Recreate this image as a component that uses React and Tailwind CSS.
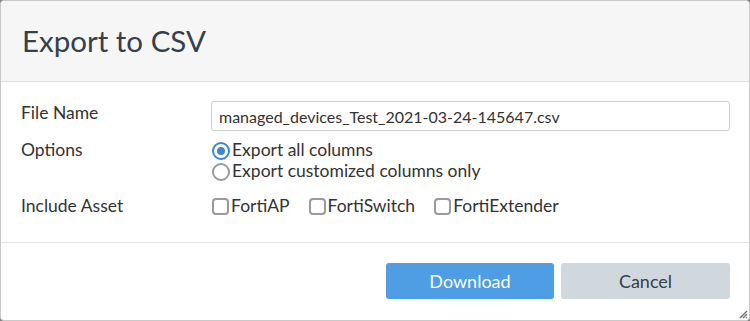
import React from 'react';

function Radio({ checked, label }) {
  return (
    <label className="flex items-center h-[21px]">
      <span
        className={
          'w-[18px] h-[18px] rounded-full border-2 flex items-center justify-center mr-[2px] ' +
          (checked ? 'border-[#3d87d0]' : 'border-[#9a9a9a]')
        }
      >
        {checked && <span className="w-[8px] h-[8px] rounded-full bg-[#3d87d0]" />}
      </span>
      <span>{label}</span>
    </label>
  );
}

function Check({ label }) {
  return (
    <label className="flex items-center mr-[19px]">
      <span className="w-[17px] h-[17px] rounded-[4px] border-2 border-[#9a9a9a] mr-[2px]" />
      <span>{label}</span>
    </label>
  );
}

export default function App() {
  return (
    <div className="w-[750px] h-[321px] bg-[#808080]" style={{ fontFamily: 'Lato, "Open Sans", sans-serif' }}>
      <div className="relative w-full h-full bg-white border border-[#c9c9c9] rounded-[4px] flex flex-col text-[17.5px] text-[#333]">
        <header className="h-[81px] bg-[#f6f6f6] border-b border-[#e2e2e2] rounded-t-[4px] flex items-center pl-[21px] shrink-0">
          <h1 className="text-[29.5px] text-[#34404c] leading-none pb-[1px]">Export to CSV</h1>
        </header>

        <div className="flex-1 pt-[19px] pl-[20px] pr-[19px]">
          <div className="flex items-center h-[30px]">
            <div className="w-[190px] pb-[5px]">File Name</div>
            <input
              readOnly
              value="managed_devices_Test_2021-03-24-145647.csv"
              className="flex-1 h-[30px] border border-[#cfcfcf] rounded-[3px] px-[7px] text-[16px] text-[#333] outline-none"
            />
          </div>
          <div className="flex mt-[9px]">
            <div className="w-[191px] leading-[19px]">Options</div>
            <div className="flex flex-col">
              <Radio checked label="Export all columns" />
              <Radio label="Export customized columns only" />
            </div>
          </div>
          <div className="flex items-center mt-[11px]">
            <div className="w-[191px]">Include Asset</div>
            <div className="flex items-center">
              <Check label="FortiAP" />
              <Check label="FortiSwitch" />
              <Check label="FortiExtender" />
            </div>
          </div>
        </div>

        <footer className="h-[78px] border-t border-[#e2e2e2] flex justify-end items-start pt-[20px] pr-[19px] gap-[7px] shrink-0">
          <button className="w-[168px] h-[36px] rounded-[3px] bg-[#4f9de4] text-white text-[18px]">Download</button>
          <button className="w-[169px] h-[36px] rounded-[3px] bg-[#d0d8de] text-[#34404c] text-[18px]">Cancel</button>
        </footer>

        <svg className="absolute right-[1px] bottom-[1px]" width="12" height="12" viewBox="0 0 12 12">
          <path d="M11 4 L4 11 M11 7 L7 11 M11 10 L10 11" stroke="#777" strokeWidth="1.5" />
        </svg>
      </div>
    </div>
  );
}
